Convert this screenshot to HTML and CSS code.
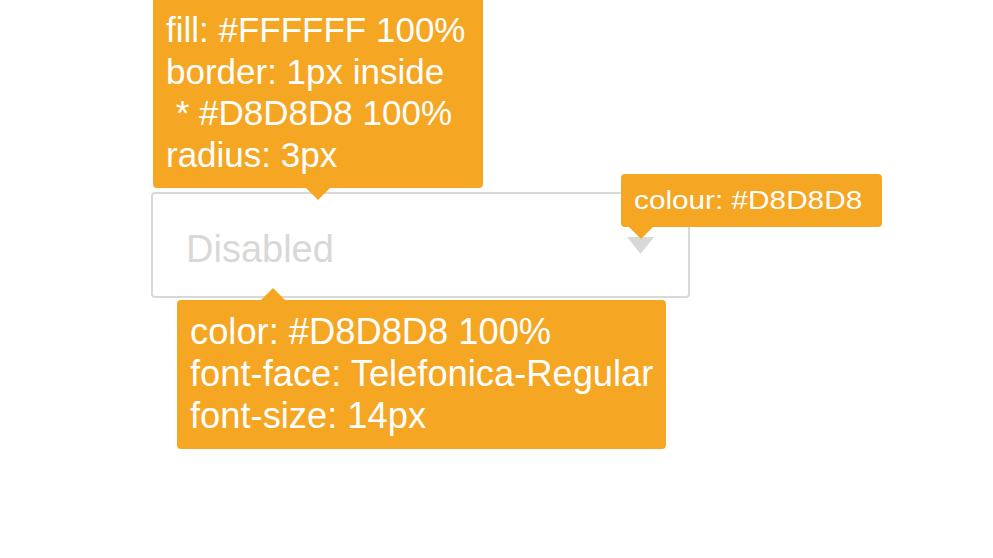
FILE: index.html
```html
<!DOCTYPE html>
<html lang="en">
<head>
<meta charset="utf-8">
<title>Disabled select spec</title>
<link rel="stylesheet" href="styles.css">
</head>
<body>
<div class="stage">
  <div class="select">
    <span class="select-label">Disabled</span>
    <svg class="select-arrow" width="27" height="17" viewBox="0 0 27 17" aria-hidden="true"><polygon points="0,0 27,0 13.5,17" fill="#D8D8D8"/></svg>
  </div>

  <div class="tip tip-box">
    <div class="line">fill: #FFFFFF 100%</div>
    <div class="line">border: 1px inside</div>
    <div class="line"> * #D8D8D8 100%</div>
    <div class="line">radius: 3px</div>
  </div>

  <div class="tip tip-arrow"><span class="tip-arrow-text">colour: #D8D8D8</span></div>

  <div class="tip tip-text">
    <div class="line">color: #D8D8D8 100%</div>
    <div class="line">font-face: Telefonica-Regular</div>
    <div class="line">font-size: 14px</div>
  </div>
</div>
</body>
</html>
```

FILE: styles.css
```css
html, body {
  margin: 0;
  padding: 0;
  background: #FFFFFF;
}

.stage {
  position: relative;
  width: 993px;
  height: 558px;
  overflow: hidden;
  padding: 192px 0 0 151px;
  box-sizing: border-box;
  font-family: "Liberation Sans", Arial, sans-serif;
}

.select {
  box-sizing: border-box;
  width: 539px;
  height: 106px;
  border: 2px solid #D8D8D8;
  border-radius: 4px;
  background: #FFFFFF;
  display: flex;
  align-items: center;
  padding: 8px 34px 0 33px;
}

.select-label {
  font-size: 38px;
  color: #D8D8D8;
  line-height: normal;
}

.select-arrow {
  margin-left: auto;
  margin-top: -8px;
  display: block;
}

.tip {
  position: absolute;
  box-sizing: border-box;
  background: #F5A623;
  color: #FFFFFF;
  border-radius: 4px;
}

.tip::after {
  content: "";
  position: absolute;
  width: 0;
  height: 0;
  border-left: 12px solid transparent;
  border-right: 12px solid transparent;
}

.line {
  white-space: pre;
}

.tip-box {
  left: 153px;
  top: -3px;
  width: 330px;
  padding: 12px 13px 13px;
  font-size: 35px;
  line-height: 41.5px;
}

.tip-box::after {
  left: 153px;
  bottom: -12px;
  border-top: 12px solid #F5A623;
}

.tip-arrow {
  left: 621px;
  top: 174px;
  width: 261px;
  height: 53px;
  padding-left: 13px;
  font-size: 25px;
  line-height: 53px;
  white-space: nowrap;
}

.tip-arrow-text {
  display: inline-block;
  transform: scaleX(1.19);
  transform-origin: left center;
}

.tip-arrow::after {
  left: 8px;
  bottom: -12px;
  border-top: 12px solid #F5A623;
}

.tip-text {
  left: 177px;
  top: 300px;
  width: 489px;
  padding: 11px 13px 12px;
  font-size: 36.3px;
  line-height: 42px;
}

.tip-text::after {
  left: 84px;
  top: -12px;
  border-bottom: 12px solid #F5A623;
}
```
